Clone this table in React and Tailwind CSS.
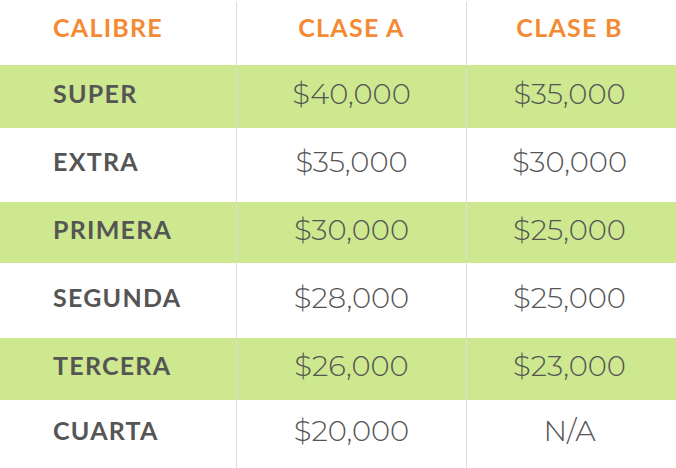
const rows = [
    { name: 'SUPER', a: '$40,000', b: '$35,000', green: true, h: 'h-[63px]' },
    { name: 'EXTRA', a: '$35,000', b: '$30,000', green: false, h: 'h-[74px]' },
    { name: 'PRIMERA', a: '$30,000', b: '$25,000', green: true, h: 'h-[61px]' },
    { name: 'SEGUNDA', a: '$28,000', b: '$25,000', green: false, h: 'h-[75px]' },
    { name: 'TERCERA', a: '$26,000', b: '$23,000', green: true, h: 'h-[62px]' },
    { name: 'CUARTA', a: '$20,000', b: 'N/A', green: false, h: 'h-[68px]' },
];

const label = "font-['Lato',sans-serif] font-bold tracking-[0.05em]";
const price = "font-['Montserrat','Inter',sans-serif] font-light text-[29px] text-[#555555]";

export default function App() {
    return (
        <div className="w-[676px] h-[468px] bg-white overflow-hidden">
            {/* header */}
            <div className="grid grid-cols-[236px_230px_1fr] h-[65px]">
                <div className={`${label} text-[25px] text-[#f48a33] flex items-center pl-[53px] pb-[9px]`}>CALIBRE</div>
                <div className="pt-[2px] flex">
                    <div className={`${label} text-[25px] text-[#f48a33] flex-1 border-l border-[#dddddd] flex items-center justify-center pb-[11px]`}>CLASE A</div>
                </div>
                <div className="pt-[2px] flex">
                    <div className={`${label} text-[25px] text-[#f48a33] flex-1 border-l border-[#dddddd] flex items-center justify-center pb-[11px] pr-[4px]`}>CLASE B</div>
                </div>
            </div>

            {rows.map(row => (
                <div
                    key={row.name}
                    className={`grid grid-cols-[236px_230px_1fr] ${row.h} ${row.green ? 'bg-[#cde88e]' : 'bg-white'}`}
                >
                    <div className={`${label} text-[25px] text-[#555555] flex items-center pl-[53px] pb-[6px]`}>{row.name}</div>
                    <div className={`${price} border-l border-[#dddddd] flex items-center justify-center pb-[6px]`}>{row.a}</div>
                    <div className={`${price} border-l border-[#dddddd] flex items-center justify-center pb-[6px] pr-[4px]`}>{row.b}</div>
                </div>
            ))}
        </div>
    );
}
